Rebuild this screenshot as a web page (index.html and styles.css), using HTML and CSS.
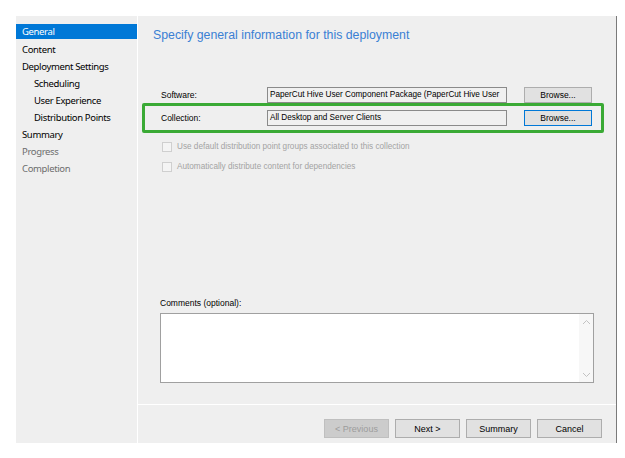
FILE: index.html
```html
<!DOCTYPE html>
<html>
<head>
<meta charset="utf-8">
<link rel="stylesheet" href="styles.css">
</head>
<body>
<div class="dialog">
  <nav class="nav">
    <div class="nav-item active">General</div>
    <div class="nav-item">Content</div>
    <div class="nav-item">Deployment Settings</div>
    <div class="nav-item sub">Scheduling</div>
    <div class="nav-item sub">User Experience</div>
    <div class="nav-item sub">Distribution Points</div>
    <div class="nav-item">Summary</div>
    <div class="nav-item dim">Progress</div>
    <div class="nav-item dim">Completion</div>
  </nav>
  <section class="main">
    <div class="content">
      <h1 class="title">Specify general information for this deployment</h1>
      <div class="row software">
        <span class="label">Software:</span>
        <div class="textbox">PaperCut Hive User Component Package (PaperCut Hive User</div>
        <button class="btn">Browse...</button>
      </div>
      <div class="highlight">
        <div class="row">
          <span class="label">Collection:</span>
          <div class="textbox">All Desktop and Server Clients</div>
          <button class="btn focus">Browse...</button>
        </div>
      </div>
      <label class="check"><span class="box"></span>Use default distribution point groups associated to this collection</label>
      <label class="check"><span class="box"></span>Automatically distribute content for dependencies</label>
      <div class="spacer"></div>
      <div class="comments-label">Comments (optional):</div>
      <div class="comments">
        <div class="scroll">
          <svg width="9" height="6" viewBox="0 0 9 6"><path d="M1 5 L4.5 1.5 L8 5" fill="none" stroke="#c2c2c2" stroke-width="1"/></svg>
          <svg width="9" height="6" viewBox="0 0 9 6"><path d="M1 1 L4.5 4.5 L8 1" fill="none" stroke="#c2c2c2" stroke-width="1"/></svg>
        </div>
      </div>
    </div>
    <footer class="footer">
      <button class="btn wide disabled">&lt; Previous</button>
      <button class="btn wide">Next &gt;</button>
      <button class="btn wide">Summary</button>
      <button class="btn wide">Cancel</button>
    </footer>
  </section>
</div>
</body>
</html>
```

FILE: styles.css
```css
* { box-sizing: border-box; }
html, body { margin: 0; padding: 0; background: #ffffff; }
body { width: 625px; height: 458px; overflow: hidden; }

.dialog {
  display: flex;
  gap: 1px;
  margin: 16px 0 0 16px;
  height: 427px;
  width: 601px;
}

.nav {
  width: 121px;
  background: #efefef;
  padding-top: 8px;
  font-family: "Noto Sans", sans-serif;
  font-size: 9.5px;
  letter-spacing: -0.35px;
  color: #000;
}
.nav-item {
  height: 17px;
  line-height: 17px;
  padding-left: 6px;
  white-space: nowrap;
}
.nav-item.active { background: #0078d7; color: #fff; height: 15px; line-height: 15px; margin-bottom: 2px; }
.nav-item.sub { padding-left: 18px; }
.nav-item.dim { color: #6d6d6d; }

.main {
  flex: 1;
  display: flex;
  flex-direction: column;
  background: #efefef;
  border-right: 1px solid #7a7a7a;
}
.content {
  flex: 1;
  display: flex;
  flex-direction: column;
  padding: 10px 0 0 0;
  font-family: "Liberation Sans", Arial, sans-serif;
  font-size: 8.5px;
  color: #000;
}
.title {
  margin: 0 0 0 15px;
  font-family: "Liberation Sans", Arial, sans-serif;
  font-weight: normal;
  font-size: 12.3px;
  line-height: 18px;
  color: #3a80d4;
}
.row {
  display: flex;
  align-items: center;
  height: 16px;
}
.software { margin: 43px 0 0 23px; }
.label { width: 106px; }
.textbox {
  width: 240px;
  height: 16px;
  border: 1px solid #8a8a8a;
  background: #f0f0f0;
  padding: 0 2px;
  font-size: 8.2px;
  line-height: 14px;
  white-space: nowrap;
  overflow: hidden;
  margin-right: 17px;
}
.btn {
  width: 68px;
  height: 16px;
  border: 1px solid #adadad;
  background: #e1e1e1;
  font-family: "Liberation Sans", Arial, sans-serif;
  font-size: 8.5px;
  color: #000;
  padding: 0;
}
.btn.focus { border-color: #0078d7; }

.highlight {
  margin: 0 0 0 4px;
  width: 462px;
  height: 30px;
  border: 3px solid #3aaa35;
  border-radius: 2px;
  padding: 4px 0 0 16px;
}

.check {
  display: flex;
  align-items: center;
  margin: 8px 0 0 24px;
  color: #a3a3a3;
  font-size: 8.2px;
  height: 11px;
}
.check + .check { margin-top: 9px; }
.box {
  width: 10px;
  height: 10px;
  border: 1px solid #cfcfcf;
  background: #f4f4f4;
  margin-right: 5px;
}
.spacer { flex: 1; }
.comments-label { margin-left: 22px; height: 12px; line-height: 12px; }
.comments {
  margin: 4px 0 21px 22px;
  width: 434px;
  height: 70px;
  border: 1px solid #a0a0a0;
  background: #fff;
  display: flex;
  justify-content: flex-end;
}
.scroll {
  width: 14px;
  height: 100%;
  background: #f7f7f7;
  display: flex;
  flex-direction: column;
  justify-content: space-between;
  align-items: center;
  padding: 5px 0 4px;
}

.footer {
  height: 39px;
  border-top: 1px solid #ffffff;
  display: flex;
  justify-content: flex-end;
  gap: 6px;
  padding: 14px 14px 0 0;
}
.btn.wide { width: 65px; height: 19px; font-size: 9px; }
.btn.disabled { background: #cccccc; border-color: #bfbfbf; color: #9c9c9c; }
```
